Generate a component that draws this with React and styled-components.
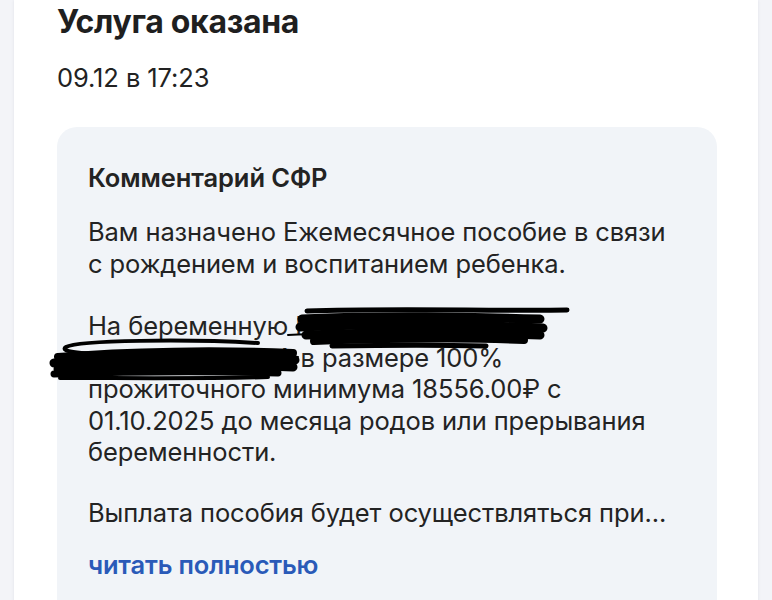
import React from 'react';
import styled, { createGlobalStyle } from 'styled-components';

const GlobalStyle = createGlobalStyle`
  html, body {
    margin: 0;
    padding: 0;
    background: #f3f4f8;
    font-family: Inter, Roboto, "Noto Sans", sans-serif;
    -webkit-font-smoothing: antialiased;
  }
`;

const Page = styled.div`
  height: 600px;
  overflow: hidden;
  padding: 0 14px;
`;

const Card = styled.section`
  background: #fff;
  min-height: 600px;
  padding: 3px 41px 0 43px;
  box-shadow: 0 0 3px rgba(20, 30, 60, 0.08);
`;

const Title = styled.h1`
  margin: 0;
  font-size: 32px;
  line-height: 38px;
  font-weight: 700;
  color: #1f1f1f;
  letter-spacing: -0.3px;
`;

const Date = styled.div`
  margin-top: 22px;
  font-size: 25.5px;
  line-height: 30px;
  color: #222;
  letter-spacing: -0.1px;
`;

const Comment = styled.div`
  margin-top: 34px;
  background: #f1f4f8;
  border-radius: 20px;
  padding: 37px 31px 40px;
  position: relative;
`;

const CommentTitle = styled.h2`
  margin: 0 0 24px;
  font-size: 25.5px;
  line-height: 28px;
  font-weight: 600;
  color: #232323;
  letter-spacing: -0.1px;
`;

const Para = styled.p`
  position: relative;
  margin: 0 0 ${(p) => p.$gap ?? 31}px;
  font-size: 25.5px;
  line-height: 31.5px;
  color: #232323;
  letter-spacing: -0.1px;
`;

const Redacted = styled.span`
  display: inline-block;
  width: ${(p) => p.$w}px;
`;

const More = styled.a`
  display: block;
  margin-top: -8px;
  font-size: 25.5px;
  line-height: 28px;
  font-weight: 600;
  color: #2a5ab8;
  text-decoration: none;
  letter-spacing: -0.2px;
`;

// marker scribble over the hidden name
const Scribble = styled.svg`
  position: absolute;
  left: 0;
  top: 3px;
  overflow: visible;
  pointer-events: none;
`;

export default function App() {
  return (
    <Page>
      <GlobalStyle />
      <Card>
        <Title>Услуга оказана</Title>
        <Date>09.12 в 17:23</Date>
        <Comment>
          <CommentTitle>Комментарий СФР</CommentTitle>
          <Para>
            Вам назначено Ежемесячное пособие в связи
            <br />с рождением и воспитанием ребенка.
          </Para>
          <Para $gap={29}>
            На беременную Н<Redacted $w={250} />
            <br />
            <Redacted $w={188} />А в размере 100%
            <br />
            прожиточного минимума 18556.00₽ с
            <br />
            01.10.2025 до месяца родов или прерывания
            <br />
            беременности.
            <Scribble width="1" height="1">
              <g fill="none" stroke="#000" strokeLinecap="round">
                <path d="M219 -2 C300 -5 400 -2 479 -3" strokeWidth="5" />
                <path d="M214 6 C300 2 380 4 452 6" strokeWidth="9" />
                <path d="M212 14 C300 10 390 12 455 15" strokeWidth="9" />
                <path d="M218 22 C320 18 400 20 452 22" strokeWidth="9" />
                <path d="M226 28 C320 25 390 25 436 27" strokeWidth="8" />
                <path d="M244 33 C300 32 360 32 398 33" strokeWidth="5" />
                <path d="M200 22 C215 21 225 21 235 22" strokeWidth="2" />
                <path d="M170 30 C100 26 -10 27 -22 34 C-30 39 -5 41 40 41" strokeWidth="4" />
                <path d="M-30 44 C40 38 130 37 205 40" strokeWidth="8" />
                <path d="M-34 50 C40 45 130 44 207 47" strokeWidth="9" />
                <path d="M-30 56 C40 52 130 51 205 54" strokeWidth="9" />
                <path d="M-34 61 C30 59 120 58 190 60" strokeWidth="7" />
                <path d="M-28 65 C40 65 120 66 180 64" strokeWidth="4" />
                <path d="M180 43 C190 43 200 43 210 44" strokeWidth="2" />
              </g>
            </Scribble>
          </Para>
          <Para>Выплата пособия будет осуществляться при...</Para>
          <More href="#">читать полностью</More>
        </Comment>
      </Card>
    </Page>
  );
}
